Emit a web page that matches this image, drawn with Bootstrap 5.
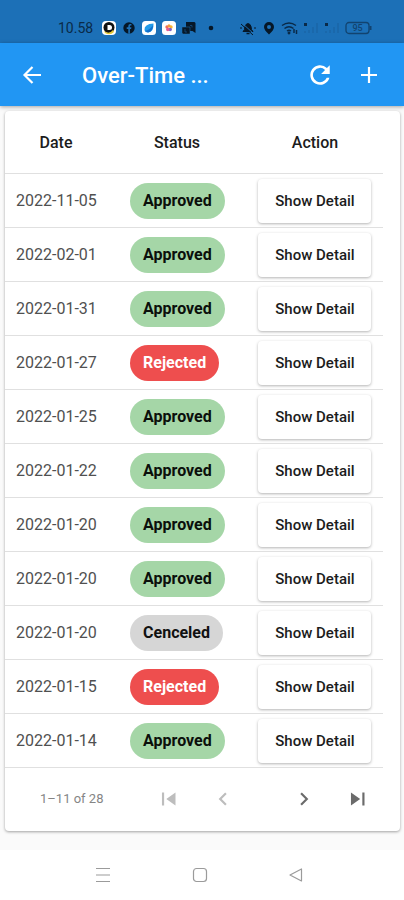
<!DOCTYPE html>
<html lang="en">
<head>
<meta charset="utf-8">
<meta name="viewport" content="width=device-width, initial-scale=1">
<title>Over-Time</title>
<link href="https://cdn.jsdelivr.net/npm/bootstrap@5.3.0/dist/css/bootstrap.min.css" rel="stylesheet">
<style>
body { font-family: Roboto, "Liberation Sans", sans-serif; background: #fafafa; color: #1c1c1c; min-height: 100vh; }
svg { display: block; flex: none; }
.status-strip { background: #1c70b7; color: #0a2a48; height: 43px; padding: 12px 32px 0 58px; font-size: 14px; line-height: 32px; }
.app-bar { background: #2196f3; height: 63px; padding: 0 23px 0 20px; box-shadow: 0 1px 4px rgba(0,0,0,.35); }
.app-bar h1 { font-size: 22px; font-weight: 500; line-height: 28px; padding: 2px 0 0 38px; }
.tool-btn { color: #fff; line-height: 0; }
.sheet { margin: 5px 4px 19px 5px; border-radius: 4px; box-shadow: 0 1px 3px rgba(0,0,0,.36); }
.sheet-body { padding-right: 17px; }
.ot-table { table-layout: fixed; font-size: 16px; line-height: 20px; }
.ot-table th { height: 62px; padding: 2px 0 0; font-weight: 500; text-align: center; vertical-align: middle; border-bottom: 1px solid #e0e0e0; }
.ot-table td { height: 54px; padding: 2px 0 0; vertical-align: middle; border-bottom: 1px solid #e0e0e0; color: #505050; }
.ot-table td:first-child { padding-left: 11px; }
.ot-table td:nth-child(2) { padding-left: 23px; }
.col-date { width: 27%; }
.col-status { width: 37%; }
.chip { display: inline-block; height: 36px; line-height: 36px; padding: 0 13px; border-radius: 18px; font-size: 16px; font-weight: 700; vertical-align: middle; }
.chip-ok { background: #a5d6a7; color: #0b0f0b; }
.chip-no { background: #ee4e4e; color: #fff; }
.chip-off { background: #d6d6d6; color: #111; }
.detail-btn { height: 44px; width: 113px; padding: 0; border-radius: 4px; background: #fff; color: #1c1c1c; font-size: 15px; font-weight: 500; line-height: 44px; box-shadow: 0 1px 3px rgba(0,0,0,.3); }
.detail-btn:hover { background: #f5f5f5; }
.pager { height: 63px; padding: 0 15px 0 35px; font-size: 13px; color: #858585; }
.pager-keys { gap: 27px; }
.page-btn { width: 54px; height: 48px; color: #6b6b6b; }
.page-btn:disabled { border-color: transparent; color: #bdbdbd; opacity: 1; }
.system-nav { background: #fff; height: 50px; padding: 0 85px 0 80px; color: #9b9b9b; }
.system-nav button { width: 46px; height: 48px; color: #9b9b9b; }
</style>
</head>
<body class="d-flex flex-column">
<div class="status-strip d-flex align-items-center">
  <span>10.58</span>
  <div class="d-flex align-items-center gap-1 ms-2">
    <svg width="16" height="16" viewBox="0 0 16 16"><rect x="1" y="1" width="14" height="14" rx="4" fill="#fff"/><circle cx="8" cy="7.5" r="5.5" fill="#111"/><path d="M6.500 5h2a2.500 2.500 0 0 1 0 5h-2z" fill="#fff"/><path d="M3 11q5 4 9-1l1 2q-4 4-9 1z" fill="#e5c834"/></svg>
    <svg width="16" height="16" viewBox="0 0 16 16"><circle cx="8" cy="8" r="5.7" fill="#061727"/><path d="M7.3 13.8V9H5.7V7.2h1.6V6q0-2 2-2h1.1v1.6h-.9q-.6 0-.6.7v.9h1.5L10.100 9H8.900v4.800z" fill="#1c70b7"/></svg>
    <svg width="16" height="16" viewBox="0 0 16 16"><rect x="1" y="1" width="14" height="14" rx="3.500" fill="#fff"/><path d="M3.500 10Q3 4 12.500 3.500 13 12 7 12.500 4 12.500 3.500 10z" fill="#239be8"/><path d="M4 11q5-1 8-6-0 7-5 7.500z" fill="#126ecb"/></svg>
    <svg width="16" height="16" viewBox="0 0 16 16"><rect x="1" y="1" width="14" height="14" rx="3.500" fill="#fff"/><circle cx="6" cy="7" r="1.700" fill="#f26d55"/><circle cx="10" cy="7" r="1.700" fill="#f7b733"/><circle cx="9.200" cy="9.500" r="1.700" fill="#7d62c9"/><circle cx="6.800" cy="9.500" r="1.700" fill="#e65b91"/><circle cx="8" cy="5.700" r="1.500" fill="#f59b3a"/></svg>
    <svg width="16" height="16" viewBox="0 0 16 16"><path d="M5 2h8.500L14.500 3v10l-3-2H5z" fill="#061727"/><path d="M1 7h8v7H2l-1-1z" fill="#061727" stroke="#1c70b7" stroke-width=".5"/><path d="M4 9v3h2M9 5.500h2v2" fill="none" stroke="#154f82" stroke-width=".8"/></svg>
    <svg class="ms-1" width="12" height="12" viewBox="0 0 12 12"><circle cx="6" cy="6" r="2.300" fill="#061727"/></svg>
  </div>
  <div class="d-flex align-items-center gap-1 ms-auto">
    <svg width="18" height="16" viewBox="0 0 18 16" fill="none" stroke="#061727"><path d="M4 11.500q2-1.500 2-5Q6.500 4 9 3.500q2.500.5 3 3 0 3.500 2 5z" fill="#061727"/><path d="M7.500 13.500h3" stroke-width="1.500"/><path d="M3 3l12 11" stroke="#1c70b7"/><path d="M2 4l12 11M1 8h2M15 8h2"/></svg>
    <svg width="16" height="16" viewBox="0 0 16 16"><path fill-rule="evenodd" d="M8 2a5 5 0 0 1 5 5q0 3-5 7.500Q3 10 3 7a5 5 0 0 1 5-5zm0 3a2 2 0 1 0 0 4 2 2 0 0 0 0-4z" fill="#061727"/></svg>
    <svg width="18" height="16" viewBox="0 0 18 16" fill="none" stroke="#0a2a48" stroke-width="1.500"><path d="M1 5.500q7-5 14 0M3.500 8.500q4.500-3.500 9 0M6 11q2-1.500 4 0M13 9v4M15.500 10v4"/><circle cx="8" cy="13" r=".7"/></svg>
    <svg width="17" height="16" viewBox="0 0 17 16"><path d="M1 3h3v3H1z" fill="#0a2a48"/><path d="M2 13v-2M6 13v-3M10 13V7M14 13V3" stroke="#1a68ab" stroke-width="2"/></svg>
    <svg width="17" height="16" viewBox="0 0 17 16"><path d="M1 3h3v3H1z" fill="#0a2a48"/><path d="M2 13v-2M6 13v-3M10 13V7M14 13V3" stroke="#1a68ab" stroke-width="2"/></svg>
    <svg width="27" height="16" viewBox="0 0 27 16"><rect x="1" y="2.500" width="23" height="11" rx="3" fill="none" stroke="#12436f" stroke-width="1.300"/><path d="M25.500 6v4" stroke="#12436f" stroke-width="2"/><text x="12.500" y="11" text-anchor="middle" font-size="9" font-weight="500" fill="#12436f">95</text></svg>
  </div>
</div>

<header class="app-bar d-flex align-items-center">
  <button class="tool-btn btn border-0 p-0" type="button" aria-label="Back"><svg width="24" height="24" viewBox="0 0 24 24" fill="none" stroke="currentColor" stroke-width="2.200"><path d="M21 12H5M12.500 4L4.500 12l8 8"/></svg></button>
  <h1 class="mb-0 text-white">Over-Time ...</h1>
  <div class="d-flex ms-auto gap-4">
    <button class="tool-btn btn border-0 p-0" type="button" aria-label="Refresh"><svg width="26" height="26" viewBox="0 0 24 24" fill="currentColor"><path d="M18.400 5.600A9 9 0 1 0 20.700 14.500H18.200A6.600 6.600 0 1 1 16.700 7.300L13 11h8V3z"/></svg></button>
    <button class="tool-btn btn border-0 p-0" type="button" aria-label="Add"><svg width="24" height="24" viewBox="0 0 24 24" fill="none" stroke="currentColor" stroke-width="2.200"><path d="M12 4v16M4 12h16"/></svg></button>
  </div>
</header>

<main class="flex-grow-1">
  <section class="sheet bg-white">
    <div class="sheet-body">
      <table class="ot-table w-100">
        <colgroup><col class="col-date"><col class="col-status"><col></colgroup>
        <thead><tr><th scope="col">Date</th><th scope="col">Status</th><th scope="col">Action</th></tr></thead>
        <tbody>
          <tr><td>2022-11-05</td><td><span class="chip chip-ok">Approved</span></td><td class="text-center"><button type="button" class="btn border-0 detail-btn">Show Detail</button></td></tr>
          <tr><td>2022-02-01</td><td><span class="chip chip-ok">Approved</span></td><td class="text-center"><button type="button" class="btn border-0 detail-btn">Show Detail</button></td></tr>
          <tr><td>2022-01-31</td><td><span class="chip chip-ok">Approved</span></td><td class="text-center"><button type="button" class="btn border-0 detail-btn">Show Detail</button></td></tr>
          <tr><td>2022-01-27</td><td><span class="chip chip-no">Rejected</span></td><td class="text-center"><button type="button" class="btn border-0 detail-btn">Show Detail</button></td></tr>
          <tr><td>2022-01-25</td><td><span class="chip chip-ok">Approved</span></td><td class="text-center"><button type="button" class="btn border-0 detail-btn">Show Detail</button></td></tr>
          <tr><td>2022-01-22</td><td><span class="chip chip-ok">Approved</span></td><td class="text-center"><button type="button" class="btn border-0 detail-btn">Show Detail</button></td></tr>
          <tr><td>2022-01-20</td><td><span class="chip chip-ok">Approved</span></td><td class="text-center"><button type="button" class="btn border-0 detail-btn">Show Detail</button></td></tr>
          <tr><td>2022-01-20</td><td><span class="chip chip-ok">Approved</span></td><td class="text-center"><button type="button" class="btn border-0 detail-btn">Show Detail</button></td></tr>
          <tr><td>2022-01-20</td><td><span class="chip chip-off">Cenceled</span></td><td class="text-center"><button type="button" class="btn border-0 detail-btn">Show Detail</button></td></tr>
          <tr><td>2022-01-15</td><td><span class="chip chip-no">Rejected</span></td><td class="text-center"><button type="button" class="btn border-0 detail-btn">Show Detail</button></td></tr>
          <tr><td>2022-01-14</td><td><span class="chip chip-ok">Approved</span></td><td class="text-center"><button type="button" class="btn border-0 detail-btn">Show Detail</button></td></tr>
        </tbody>
      </table>
    </div>
    <nav class="pager d-flex align-items-center" aria-label="Pages">
      <span>1–11 of 28</span>
      <div class="pager-keys d-flex ms-auto">
        <div class="d-flex">
          <button class="page-btn btn border-0 p-0 d-flex align-items-center justify-content-center" type="button" aria-label="First page" disabled><svg width="26" height="26" viewBox="0 0 24 24" fill="currentColor"><path d="M5.500 6h2v12h-2zM18 6v12l-8.500-6z"/></svg></button>
          <button class="page-btn btn border-0 p-0 d-flex align-items-center justify-content-center" type="button" aria-label="Previous page" disabled><svg width="26" height="26" viewBox="0 0 24 24" fill="none" stroke="currentColor" stroke-width="2"><path d="M14.700 6.700L9.400 12l5.300 5.300"/></svg></button>
        </div>
        <div class="d-flex">
          <button class="page-btn btn border-0 p-0 d-flex align-items-center justify-content-center" type="button" aria-label="Next page"><svg width="26" height="26" viewBox="0 0 24 24" fill="none" stroke="currentColor" stroke-width="2"><path d="M9.300 6.700l5.300 5.300-5.300 5.300"/></svg></button>
          <button class="page-btn btn border-0 p-0 d-flex align-items-center justify-content-center" type="button" aria-label="Last page"><svg width="26" height="26" viewBox="0 0 24 24" fill="currentColor"><path d="M5.500 6l8.500 6-8.500 6zM16 6h2v12h-2z"/></svg></button>
        </div>
      </div>
    </nav>
  </section>
</main>

<footer class="system-nav d-flex align-items-center justify-content-between">
  <button class="btn border-0 p-0 d-flex align-items-center justify-content-center" type="button" aria-label="Recent apps"><svg width="16" height="16" viewBox="0 0 16 16" stroke="currentColor" stroke-width="1.200"><path d="M1 1.500h14M1 8h14M1 14.500h14"/></svg></button>
  <button class="btn border-0 p-0 d-flex align-items-center justify-content-center" type="button" aria-label="Home"><svg width="16" height="16" viewBox="0 0 16 16" fill="none" stroke="currentColor" stroke-width="1.200"><rect x="1.500" y="1.500" width="13" height="13" rx="3"/></svg></button>
  <button class="btn border-0 p-0 d-flex align-items-center justify-content-center" type="button" aria-label="Back"><svg width="16" height="16" viewBox="0 0 16 16" fill="none" stroke="currentColor" stroke-width="1.200" stroke-linejoin="round"><path d="M13.500 2v12L2 8z"/></svg></button>
</footer>
<script src="https://cdn.jsdelivr.net/npm/bootstrap@5.3.0/dist/js/bootstrap.bundle.min.js"></script>
</body>
</html>
